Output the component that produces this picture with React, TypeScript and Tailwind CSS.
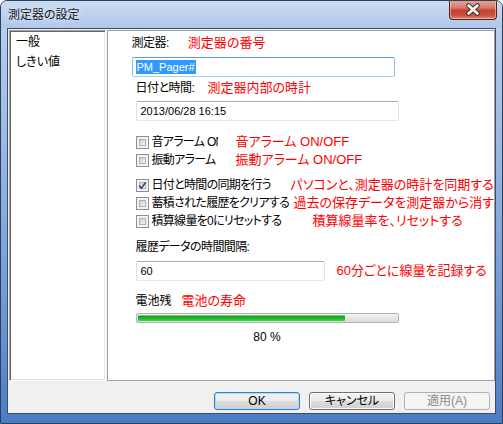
import React from 'react'

const font = "font-['Liberation_Sans','Noto_Sans_CJK_JP',sans-serif] [font-feature-settings:'palt']"

function CheckBox({ checked }: { checked?: boolean }) {
  return (
    <span className="relative block w-[13px] h-[13px] shrink-0 border border-[#8e8f8f] bg-[#f4f4f4] p-[2px]">
      <span className="block w-full h-full border border-[#aeb1b5] bg-[linear-gradient(135deg,#cbcdd0,#f6f6f6)]" />
      {checked && (
        <svg className="absolute left-0 top-0" width="11" height="11" viewBox="0 0 11 11">
          <path d="M2.2 5.6 L4.4 8.2 L8.8 2.2" fill="none" stroke="#3b4f8c" strokeWidth="1.7" />
        </svg>
      )}
    </span>
  )
}

function CheckRow({ label, note, width, checked, clip }: { label: string; note: string; width: string; checked?: boolean; clip?: boolean }) {
  return (
    <div className="h-[18px] flex items-center">
      <div className={`flex items-center gap-[3px] shrink-0 ${width}`}>
        <CheckBox checked={checked} />
        <span className={`text-[12px] leading-[16px] tracking-[-0.7px] text-black whitespace-nowrap ${clip ? 'w-[66px] overflow-hidden' : ''}`}>{label}</span>
      </div>
      <span className="text-[13px] leading-[16px] text-[#ff0000] whitespace-nowrap">{note}</span>
    </div>
  )
}

export default function App() {
  return (
    <div className={`w-[503px] h-[424px] overflow-hidden rounded-t-[7px] border border-[#2c3f5e] bg-[linear-gradient(to_bottom,#c5d8f0_0%,#b0c9ea_12%,#8eb0df_45%,#6691d0_80%,#4a7cc4_100%)] flex flex-col px-[6px] pb-[9px] ${font}`}>
      {/* Title bar */}
      <div className="relative h-[27px] shrink-0 flex items-center -mx-[6px] px-[7px] bg-[linear-gradient(to_bottom,#cadcf2_0%,#bcd1ee_50%,#afc8ea_100%)]">
        <span className="text-[12px] leading-[16px] text-[#1a1a1a] [text-shadow:0_0_6px_#eef4fb]">測定器の設定</span>
        <div className="absolute top-[-1px] right-[5px] w-[48px] h-[20px] rounded-b-[4px] border border-[#5b221c] border-t-0 bg-[linear-gradient(to_bottom,#e6a89c_0%,#d77a6c_40%,#c5422f_55%,#c9503d_80%,#db8a76_100%)] shadow-[inset_0_0_0_1px_rgba(255,220,210,0.5)] flex items-center justify-center">
          <svg width="16" height="13" viewBox="0 0 16 13">
            <path d="M3.5 2.5 L12.5 10.5 M12.5 2.5 L3.5 10.5" stroke="#4a2a26" strokeWidth="4.6" strokeLinecap="round" />
            <path d="M3.5 2.5 L12.5 10.5 M12.5 2.5 L3.5 10.5" stroke="#ffffff" strokeWidth="2.6" strokeLinecap="round" />
          </svg>
        </div>
      </div>

      {/* Client area */}
      <div className="flex-1 flex flex-col border border-[#3a4d6a] bg-[#f0f0f0]">
        <div className="h-[352px] flex gap-[1px] pt-[1px] pl-[1px]">
          {/* Left list */}
          <div className="w-[98px] h-[351px] border border-t-[#a0a0a0] border-l-[#a0a0a0] border-r-white border-b-white bg-white shadow-[inset_1px_1px_0_#696969,inset_-1px_-1px_0_#e3e3e3] pt-[1px] pl-[6px] font-['Liberation_Sans','Noto_Sans_CJK_JP',sans-serif]">
            <div className="text-[12px] leading-[20px] text-black">一般</div>
            <div className="text-[12px] leading-[20px] text-black">しきい値</div>
          </div>

          {/* Right panel */}
          <div className="flex-1 h-[351px] border border-[#a0a0a0] bg-white flex flex-col pl-[24px]">
            <div className="mt-[4px] h-[16px] flex items-center gap-[19px]">
              <span className="text-[12px] leading-[16px] tracking-[-0.5px] text-black">測定器:</span>
              <span className="text-[13px] leading-[16px] text-[#ff0000]">測定器の番号</span>
            </div>
            <div className="mt-[6px] h-[20px] w-[263px] rounded-[2px] border border-[#5a9ee0] border-x-[#8ebeea] border-b-[#a9cfef] flex items-center pl-[3px]">
              <span className="h-[14px] bg-[#3399ff] text-white text-[11px] leading-[14px] px-[1px]">PM_Pager#</span>
            </div>

            <div className="ml-[4px] mt-[3px] h-[16px] flex items-center gap-[13px]">
              <span className="text-[12px] leading-[16px] tracking-[-0.5px] text-black">日付と時間:</span>
              <span className="text-[13px] leading-[16px] text-[#ff0000]">測定器内部の時計</span>
            </div>
            <div className="ml-[4px] mt-[5px] h-[20px] w-[263px] rounded-[2px] border border-[#abadb3] border-x-[#dbdfe6] border-b-[#e3e9ef] flex items-center pl-[4px] text-[11px] text-black">
              2013/06/28 16:15
            </div>

            <div className="ml-[4px] mt-[12px] flex flex-col">
              <CheckRow label="音アラーム ON" note="音アラーム ON/OFF" width="w-[100px]" clip />
              <CheckRow label="振動アラーム" note="振動アラーム ON/OFF" width="w-[100px]" />
            </div>
            <div className="ml-[4px] mt-[7px] flex flex-col">
              <CheckRow label="日付と時間の同期を行う" note="パソコンと、測定器の時計を同期する" width="w-[155px]" checked />
              <CheckRow label="蓄積された履歴をクリアする" note="過去の保存データを測定器から消す" width="w-[158px]" />
              <CheckRow label="積算線量を0にリセットする" note="積算線量率を、リセットする" width="w-[177px]" />
            </div>

            <div className="ml-[4px] mt-[9px] h-[16px] flex items-center">
              <span className="text-[12px] leading-[16px] tracking-[-0.6px] text-black">履歴データの時間間隔:</span>
            </div>
            <div className="ml-[4px] mt-[6px] h-[20px] flex items-center gap-[12px]">
              <div className="h-[20px] w-[189px] rounded-[2px] border border-[#abadb3] border-x-[#dbdfe6] border-b-[#e3e9ef] flex items-center pl-[4px] text-[11px] text-black">
                60
              </div>
              <span className="text-[13px] leading-[16px] text-[#ff0000] whitespace-nowrap">60分ごとに線量を記録する</span>
            </div>

            <div className="ml-[4px] mt-[12px] h-[16px] flex items-center gap-[10px]">
              <span className="text-[12px] leading-[16px] text-black">電池残</span>
              <span className="text-[13px] leading-[16px] text-[#ff0000]">電池の寿命</span>
            </div>
            <div className="ml-[4px] mt-[4px] h-[10px] w-[263px] rounded-[2px] border border-[#b2b2b2] bg-[linear-gradient(to_bottom,#f3f3f3,#dcdcdc)] p-[1px] flex">
              <div className="h-full rounded-[1px] bg-[linear-gradient(to_bottom,#a6e6a8_0%,#169e1f_25%,#1fb92a_55%,#3cd846_100%)]" style={{ width: '80%' }} />
            </div>
            <div className="ml-[4px] mt-[7px] h-[14px] w-[263px] flex items-center justify-center text-[12px] leading-[14px] text-black">
              80 %
            </div>
          </div>
        </div>

        {/* Buttons */}
        <div className="h-[32px] flex justify-end items-start gap-[9px] pr-[5px] pt-[11px]">
          <button className="w-[86px] h-[18px] rounded-[3px] border border-[#3c7fb1] bg-[linear-gradient(to_bottom,#f2f2f2_0%,#ebebeb_50%,#dddddd_50%,#cfcfcf_100%)] shadow-[inset_0_0_0_1px_#a9dcf6] flex items-center justify-center text-[12px] leading-[14px] text-black">
            OK
          </button>
          <button className="w-[86px] h-[18px] rounded-[3px] border border-[#707070] bg-[linear-gradient(to_bottom,#f2f2f2_0%,#ebebeb_50%,#dddddd_50%,#cfcfcf_100%)] shadow-[inset_0_0_0_1px_#fcfcfc] flex items-center justify-center text-[12px] leading-[14px] text-black">
            キャンセル
          </button>
          <button className="w-[86px] h-[18px] rounded-[3px] border border-[#adb2b5] bg-[#f4f4f4] flex items-center justify-center text-[12px] leading-[14px] text-[#8d8d8d]">
            適用(A)
          </button>
        </div>
      </div>
    </div>
  )
}
